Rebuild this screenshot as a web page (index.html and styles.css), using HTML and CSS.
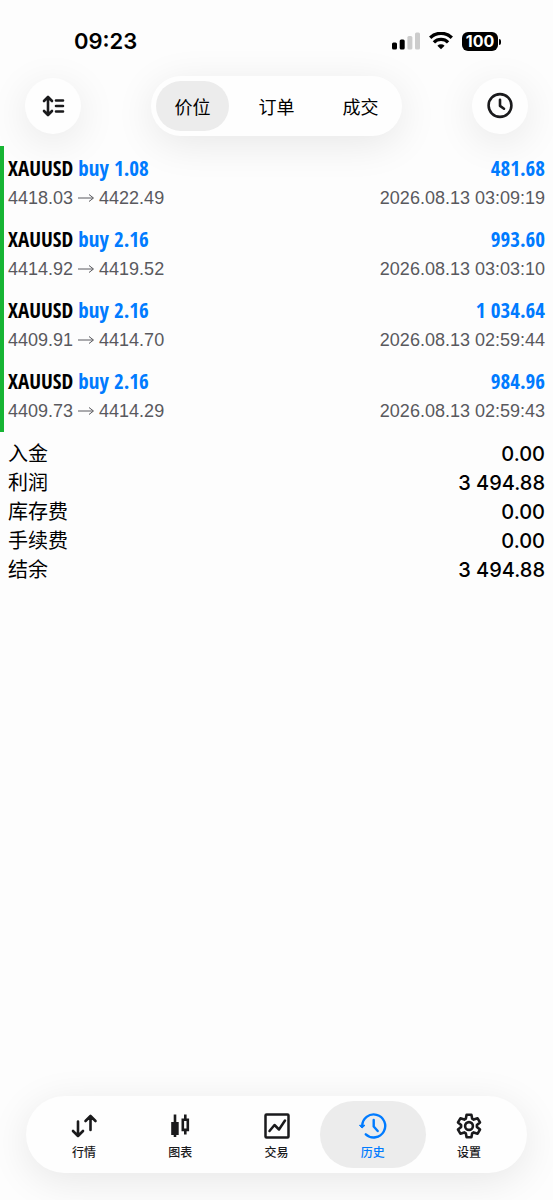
FILE: index.html
```html
<!DOCTYPE html>
<html lang="zh-CN">
<head>
<meta charset="utf-8">
<meta name="viewport" content="width=device-width, initial-scale=1">
<title>历史</title>
<link rel="stylesheet" href="styles.css">
</head>
<body>
<div class="app">
  <header class="top">
    <div class="status">
      <time class="clock">09:23</time>
      <div class="indicators">
        <svg class="signal" viewBox="0 0 28 18" aria-hidden="true"><rect x="0" y="10.5" width="5" height="7" rx="1.5"/><rect x="7.7" y="7.5" width="5" height="10" rx="1.5"/><g fill="#ccc"><rect x="15.4" y="4" width="5" height="13.5" rx="1.5"/><rect x="23" y="0.5" width="5" height="17" rx="1.5"/></g></svg>
        <svg class="wifi" viewBox="0 0 24 18" aria-hidden="true"><g fill="none" stroke="#000" stroke-width="3.3"><path d="M1.2 5.700a15.500 15.500 0 0 1 21.600 0"/><path d="M4.900 10.300a10 10 0 0 1 14.200 0"/></g><path d="M8.400 13.700a5.200 5.200 0 0 1 7.200 0L12 17.300z"/></svg>
        <span class="battery">100</span>
      </div>
    </div>
    <div class="toolbar">
      <button class="round" type="button" aria-label="排序"><svg viewBox="0 0 24 24" fill="none" stroke="#1a1a1c" stroke-width="2.6" stroke-linecap="round" stroke-linejoin="round"><path d="M7 4v16M3 7l4-4 4 4M3 17l4 4 4-4"/><path d="M15 6.500h7M15 12h7M15 17.500h7"/></svg></button>
      <div class="segments">
        <button class="segment selected" type="button" aria-pressed="true">价位</button>
        <button class="segment" type="button" aria-pressed="false">订单</button>
        <button class="segment" type="button" aria-pressed="false">成交</button>
      </div>
      <button class="round" type="button" aria-label="时间段"><svg class="wide" viewBox="0 0 28 28" fill="none" stroke="#1a1a1c" stroke-width="2.6" stroke-linecap="round" stroke-linejoin="round"><circle cx="14" cy="13.500" r="11.400"/><path d="M14 7.700v6.200l4 2.800"/></svg></button>
    </div>
  </header>
  <main>
    <ul class="deals">
      <li class="deal"><div class="line main"><span>XAUUSD <span class="buy">buy 1.08</span></span><span class="buy">481.68</span></div><div class="line detail"><span class="prices">4418.03 <svg class="arrow" viewBox="0 0 16 12"><path d="M0 6h15M11 2.500l4.500 3.500-4.500 3.500"/></svg> 4422.49</span><time>2026.08.13 03:09:19</time></div></li>
      <li class="deal"><div class="line main"><span>XAUUSD <span class="buy">buy 2.16</span></span><span class="buy">993.60</span></div><div class="line detail"><span class="prices">4414.92 <svg class="arrow" viewBox="0 0 16 12"><path d="M0 6h15M11 2.500l4.500 3.500-4.500 3.500"/></svg> 4419.52</span><time>2026.08.13 03:03:10</time></div></li>
      <li class="deal"><div class="line main"><span>XAUUSD <span class="buy">buy 2.16</span></span><span class="buy">1 034.64</span></div><div class="line detail"><span class="prices">4409.91 <svg class="arrow" viewBox="0 0 16 12"><path d="M0 6h15M11 2.500l4.500 3.500-4.500 3.500"/></svg> 4414.70</span><time>2026.08.13 02:59:44</time></div></li>
      <li class="deal"><div class="line main"><span>XAUUSD <span class="buy">buy 2.16</span></span><span class="buy">984.96</span></div><div class="line detail"><span class="prices">4409.73 <svg class="arrow" viewBox="0 0 16 12"><path d="M0 6h15M11 2.500l4.500 3.500-4.500 3.500"/></svg> 4414.29</span><time>2026.08.13 02:59:43</time></div></li>
    </ul>
    <dl class="totals">
      <div class="total"><dt>入金</dt><dd>0.00</dd></div>
      <div class="total"><dt>利润</dt><dd>3 494.88</dd></div>
      <div class="total"><dt>库存费</dt><dd>0.00</dd></div>
      <div class="total"><dt>手续费</dt><dd>0.00</dd></div>
      <div class="total"><dt>结余</dt><dd>3 494.88</dd></div>
    </dl>
  </main>
  <nav class="tabs">
    <a class="tab" href="#quotes"><svg viewBox="0 0 28 28" fill="none" stroke="currentColor" stroke-width="2.6" stroke-linecap="round" stroke-linejoin="round"><path d="M8 9.500V24M3 19l5 5 5-5M20.500 18V4M15.500 9l5-5 5 5"/></svg>行情</a>
    <a class="tab" href="#charts"><svg viewBox="0 0 28 28" fill="none" stroke="currentColor" stroke-width="2.6"><path d="M9 2.500V25M19.300 2.500v5M19.300 18v4.500"/><path d="M5.200 10h7.500v13H5.200z" fill="currentColor" stroke="none"/><path d="M16.800 7.700h5v10.200h-5z"/></svg>图表</a>
    <a class="tab" href="#trade"><svg viewBox="0 0 28 28" fill="none" stroke="currentColor" stroke-width="2.5" stroke-linecap="round" stroke-linejoin="round"><rect x="2.500" y="2.500" width="23" height="23" rx="1"/><path d="M6.500 19l5-6 4.500 4.500 6-9"/></svg>交易</a>
    <a class="tab current" href="#history" aria-current="page"><svg viewBox="0 0 28 28" fill="none" stroke="currentColor" stroke-width="2.4" stroke-linecap="round" stroke-linejoin="round"><path d="M3.200 14A11.500 11.500 0 1 1 6.800 22.300"/><path d="M14.700 8v6.500l4 4.500"/><path d="M.8 13.300H6L3.300 15.800z" fill="currentColor" stroke-width="1"/></svg>历史</a>
    <a class="tab" href="#settings"><svg viewBox="0 0 28 28" fill="none" stroke="currentColor" stroke-width="2.6" stroke-linejoin="round"><path d="M10.800 6.700L11.600 2.700h4.800l.8 4 1.500.9 3.900-1.300L25 10.400l-3.100 2.700v1.800L25 17.600l-2.400 4.100-3.900-1.300-1.500.9-.8 4h-4.800l-.8-4-1.500-.9-3.900 1.300L3 17.600l3.100-2.700v-1.800L3 10.400l2.400-4.100 3.900 1.300z"/><circle cx="14" cy="14" r="3.900"/></svg>设置</a>
  </nav>
</div>
</body>
</html>
```
FILE: styles.css
```css
* { box-sizing: border-box; }
body {
  margin: 0;
  background: #fdfdfd;
  color: #000;
  font-family: "Inter", "Noto Sans CJK SC", sans-serif;
}
button { border: 0; padding: 0; font: inherit; color: inherit; background: none; }
.app { min-height: 100vh; display: flex; flex-direction: column; overflow: hidden; }
.status {
  display: flex;
  justify-content: space-between;
  align-items: center;
  padding: 24px 52px 0 74px;
  height: 58px;
}
.clock { font-size: 22px; font-weight: 600; }
.indicators { display: flex; align-items: center; gap: 9px; }
.signal { width: 28px; height: 18px; }
.wifi { width: 24px; height: 18px; }
.battery {
  position: relative;
  width: 36px;
  height: 19px;
  border-radius: 6px;
  background: #000;
  color: #fff;
  font-size: 16px;
  font-weight: 700;
  line-height: 19px;
  text-align: center;
  margin-right: 3px;
}
.battery::after {
  content: "";
  position: absolute;
  right: -3px;
  top: 7px;
  width: 2px;
  height: 6px;
  border-radius: 0 2px 2px 0;
  background: #000;
}
.toolbar {
  display: flex;
  justify-content: space-between;
  align-items: center;
  padding: 18px 25px 10px;
}
.round, .segments, .tabs { background: #fefefe; box-shadow: 0 8px 40px rgba(0, 0, 0, 0.09); }
.round {
  display: grid;
  place-items: center;
  width: 56px;
  height: 56px;
  border-radius: 50%;
}
.round svg { width: 24px; height: 24px; }
.round .wide { width: 28px; height: 28px; }
.segments { display: flex; gap: 11px; padding: 5px; border-radius: 30px; }
.segment { width: 73px; height: 50px; border-radius: 25px; font-size: 18px; }
.selected { background: #ececec; }
main { position: relative; }
.deals {
  list-style: none;
  margin: 0;
  padding: 1px 0;
  border-left: 4px solid #17b534;
}
.deal { padding: 7px 8px 7px 4px; }
.line { display: flex; justify-content: space-between; }
.main {
  margin-bottom: 3px;
  font-family: "Avenir Next Condensed", "Open Sans Condensed", "Roboto Condensed", "Liberation Sans Narrow", sans-serif;
  font-size: 21px;
  font-weight: 700;
  line-height: 28px;
}
.buy { color: #007bff; }
.detail {
  font-family: "Liberation Sans", sans-serif;
  font-size: 18px;
  line-height: 26px;
  color: #59595e;
}
.arrow { width: 16px; height: 12px; fill: none; stroke: currentColor; stroke-width: 1; }
.totals { margin: 0; padding: 8px; }
.total { display: flex; justify-content: space-between; line-height: 29px; font-size: 20px; }
dd { margin: 0; font-weight: 500; }
.tabs {
  display: flex;
  margin: auto 26px 27px;
  padding: 5px 10px;
  border-radius: 39px;
}
.tab {
  flex: 1;
  display: flex;
  flex-direction: column;
  align-items: center;
  gap: 3px;
  margin: 0 -5px;
  padding: 11px 0 5px;
  border-radius: 34px;
  color: #1a1a1c;
  font-size: 12px;
  line-height: 20px;
  font-weight: 500;
  text-decoration: none;
}
.tab svg { width: 28px; height: 28px; }
.current { background: #ececec; color: #007bff; }
```
